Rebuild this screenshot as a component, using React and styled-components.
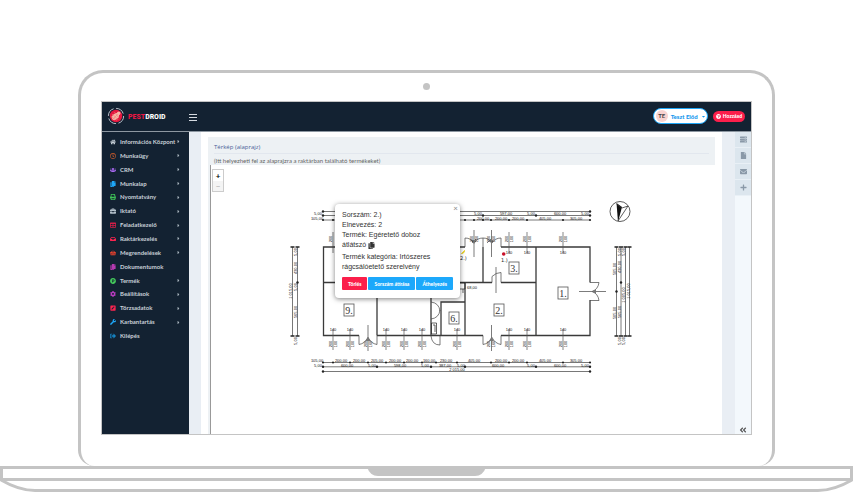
import styled, { createGlobalStyle } from 'styled-components';
import {
  FaHome, FaUsers, FaCopy, FaPrint, FaBriefcase, FaTable, FaShoppingBasket,
  FaCog, FaPenSquare, FaWrench, FaSignOutAlt, FaRegClock, FaProductHunt,
  FaServer, FaFile, FaEnvelope, FaPlus, FaAngleDoubleLeft, FaCaretRight,
  FaCaretDown, FaQuestionCircle, FaInbox,
} from 'react-icons/fa';

const MENU = [
  { label: 'Információs Központ', icon: FaHome, color: '#c3ccd4', sub: true },
  { label: 'Munkaügy', icon: FaRegClock, color: '#d8602c', sub: true },
  { label: 'CRM', icon: FaUsers, color: '#a868f0', sub: true },
  { label: 'Munkalap', icon: FaCopy, color: '#1ea7f8', sub: true },
  { label: 'Nyomtatvány', icon: FaPrint, color: '#3fc458', sub: true },
  { label: 'Iktató', icon: FaBriefcase, color: '#b4c0ca', sub: true },
  { label: 'Feladatkezelő', icon: FaTable, color: '#d41f48', sub: true },
  { label: 'Raktárkezelés', icon: FaInbox, color: '#fb2450', sub: true },
  { label: 'Megrendelések', icon: FaShoppingBasket, color: '#f5442e', sub: true },
  { label: 'Dokumentumok', icon: FaCopy, color: '#b63ab0' },
  { label: 'Termék', icon: FaProductHunt, color: '#45cc5c', sub: true },
  { label: 'Beállítások', icon: FaCog, color: '#b83cc0', sub: true },
  { label: 'Törzsadatok', icon: FaPenSquare, color: '#fb2450', sub: true },
  { label: 'Karbantartás', icon: FaWrench, color: '#1ea7f8', sub: true },
  { label: 'Kilépés', icon: FaSignOutAlt, color: '#1584c4' },
];

const TOOLS = [
  { label: 'Feladatok', icon: FaServer },
  { label: 'Dokumentum', icon: FaFile },
  { label: 'Üzenetek', icon: FaEnvelope },
  { label: 'Hozzáadás', icon: FaPlus },
];

const Logo = () => (
  <svg width="18" height="18" viewBox="0 0 18 18" aria-hidden="true">
    <circle cx="9" cy="9" r="7.6" fill="none" stroke="#c9d0d8" strokeWidth="0.9" strokeDasharray="9.300 2.600" />
    <circle cx="9" cy="9" r="6.2" fill="#e5173f" />
    <g transform="rotate(45 9 9)">
      <ellipse cx="9" cy="9.8" rx="2.8" ry="4" fill="#f6b8a8" />
      <circle cx="9" cy="5.2" r="1.800" fill="#f6b8a8" />
      <path d="M5.400 7.400l7.200 1M5 10.200h8M5.600 13l6.800-1.400M9 6.500v7" stroke="#f08a80" strokeWidth="0.7" fill="none" />
    </g>
  </svg>
);

// Horizontal dimension lines: [text, centre x]
const TOP_OUTER = [['5,00', 318], ['5,00', 478], ['597,00', 506], ['5,00', 531], ['600,00', 560], ['5,00', 585]];
const TOP_INNER = [['105,00', 317], ['200,00', 483], ['200,00', 501], ['200,00', 518], ['405,00', 545], ['305,00', 576]];
const BOTTOM_INNER = [
  ['105,00', 317], ['200,00', 341], ['200,00', 359], ['205,00', 377], ['200,00', 395], ['200,00', 412],
  ['160,00', 429], ['230,00', 446], ['405,00', 474], ['200,00', 501], ['200,00', 518], ['405,00', 545], ['305,00', 576],
];
const BOTTOM_OUTER = [
  ['5,00', 318], ['600,00', 347], ['5,00', 372], ['598,00', 400], ['5,00', 425], ['387,00', 445],
  ['5,00', 461], ['600,00', 498], ['5,00', 531], ['600,00', 560], ['5,00', 585],
];
const WINDOWS_TOP = [509, 527, 563];
const WINDOWS_BOTTOM = [333, 350, 386, 404, 422, 457, 509, 527, 563];
const ROOMS = [['9.', 349, 310], ['6.', 454, 318], ['2.', 499, 310], ['1.', 563, 293], ['3.', 514, 268]];
const TICKS_TOP = [323, 333, 465, 474, 483, 491, 509, 527, 563, 590];
const TICKS_BOTTOM = [323, 333, 350, 368, 386, 404, 422, 436, 457, 491, 509, 527, 563, 590];

const VerticalText = ({ x, y, children }) => (
  <text transform={`translate(${x} ${y}) rotate(-90)`} textAnchor="middle">{children}</text>
);

const WindowMark = ({ x, y, labelY, sizeY }) => (
  <g>
    <path d={`M${x} ${y - 11}v21`} stroke="#555" strokeWidth="0.7" />
    <text x={x} y={labelY} textAnchor="middle">140</text>
    <VerticalText x={x - 1} y={sizeY}>200</VerticalText>
    <VerticalText x={x + 4} y={sizeY}>100</VerticalText>
  </g>
);

const FloorPlan = () => (
  <PlanSvg viewBox="211 165 504 269" role="img" aria-label="Raktár alaprajza">
    <g fill="none" stroke="#555" strokeWidth="0.8">
      <path d="M323 211.500H590M323 215.500H590M323 220H590" />
      <path d="M323 362.500H590M323 366.800H590M323 371.500H590" />
      <path d="M292.500 247V336M297.500 247V336" />
      <path d="M616.500 247V336M621 247V336M625.500 247V336M629.500 247V336" />
    </g>
    <g fill="#222">
      {TICKS_TOP.map((x) => <circle key={x} cx={x} cy="220" r="1.100" />)}
      {TICKS_BOTTOM.map((x) => <circle key={x} cx={x} cy="362.500" r="1.100" />)}
      {[323, 377, 431, 465, 536, 590].map((x) => <circle key={x} cx={x} cy="366.800" r="1.200" />)}
      {[323, 483, 536, 590].map((x) => <circle key={x} cx={x} cy="215.500" r="1.200" />)}
      {[323, 590].map((x) => <circle key={x} cx={x} cy="211.500" r="1.200" />)}
      {[323, 590].map((x) => <circle key={x} cx={x} cy="371.500" r="1.200" />)}
      {[292.5, 297.5, 616.5, 621, 625.5, 629.5].map((x) => (
        <path key={x} d={`M${x - 2} 247h4M${x - 2} 336h4`} stroke="#222" strokeWidth="1.4" />
      ))}
      <circle cx="297.500" cy="282.500" r="1.200" />
      <circle cx="616.500" cy="291.500" r="1.200" />
      <circle cx="621" cy="282.500" r="1.200" />
    </g>
    <g fill="none" stroke="#3a3a3a" strokeWidth="1.3">
      <path d="M465 247H323.500V335.500H359M377 335.500H483M501 335.500H590V300M590 282.500V247H501" />
      <path d="M323.500 282.500H465M377 282.500V335.500M431 282.500V335.500M465 282.500V335.500" />
      <path d="M465 282.500H492M501 282.500H536M483 247V282.500M536 247V335.500" />
      <path d="M441 335.500V302H465" />
    </g>
    <g fill="none" stroke="#444" strokeWidth="0.7">
      <path d="M465 247v-9q6 0 9 5q3-5 9-5v9M483 238q6 0 9 5q3-5 9-5v9" />
      <path d="M483 335.500v9q6-1 9-7q3 6 9 7v-9M359 335.500v9q6-1 9-7q3 6 9 7v-9" />
      <path d="M590 282.500h9q-1 7-7 9q6 2 7 9h-9M579 291.500h27" />
      <path d="M492 282.500v-6q4-4 9-4v10M496 267v26M491.500 230v27M474 230v27" />
      <path d="M368 325v26M491.500 325v26M431 302q8 1 9 9M431 319q8-1 9-9M431 336q1 9 9 9v-9" />
      <path d="M431.500 323h5v11h-5zM433 325h2v7" stroke="#222" />
      <path d="M455 283h10v6h-10M459 283v9M463 289v4" stroke="#222" />
      <path d="M487 243l4-4M472 243l4-4M333 232v21" />
    </g>
    <g fill="#777">
      <path d="M365 341l3-4 3 4zM489 341l2.500-4 2.500 4zM489 240l2.500 4 2.500-4zM471 240l3 4 3-4zM596 289l-4 2.500 4 2.500z" />
    </g>
    <g fontFamily="'Liberation Sans', Arial, sans-serif" fontSize="4" fill="#111">
      {TOP_OUTER.map(([text, x]) => <text key={x} x={x} y="215" textAnchor="middle">{text}</text>)}
      {TOP_INNER.map(([text, x]) => <text key={x} x={x} y="220" textAnchor="middle">{text}</text>)}
      {BOTTOM_INNER.map(([text, x]) => <text key={x} x={x} y="362" textAnchor="middle">{text}</text>)}
      {BOTTOM_OUTER.map(([text, x]) => <text key={x} x={x} y="367" textAnchor="middle">{text}</text>)}
      <text x="457" y="371" textAnchor="middle">2 015,00</text>
      <text x="467" y="289">68,00</text>
      <VerticalText x={332} y={239}>200</VerticalText>
      {WINDOWS_TOP.map((x) => <WindowMark key={x} x={x} y={243} labelY={254} sizeY={239} />)}
      {WINDOWS_BOTTOM.map((x) => <WindowMark key={x} x={x} y={340} labelY={331} sizeY={344} />)}
      {[368, 491].map((x) => (
        <g key={x}>
          <VerticalText x={x - 1} y={344}>200</VerticalText>
          <VerticalText x={x + 4} y={344}>160</VerticalText>
        </g>
      ))}
      {[474, 491].map((x) => (
        <g key={x}>
          <VerticalText x={x - 1} y={239}>200</VerticalText>
          <VerticalText x={x + 4} y={239}>160</VerticalText>
        </g>
      ))}
      <VerticalText x={292} y={291}>1 015,00</VerticalText>
      <VerticalText x={297} y={268}>430,00</VerticalText>
      <VerticalText x={297} y={312}>565,00</VerticalText>
      <VerticalText x={297} y={252}>5,00</VerticalText>
      <VerticalText x={297} y={287}>5,00</VerticalText>
      <VerticalText x={297} y={341}>5,00</VerticalText>
      <VerticalText x={616} y={269}>505,00</VerticalText>
      <VerticalText x={616} y={313}>505,00</VerticalText>
      <VerticalText x={621} y={267}>430,00</VerticalText>
      <VerticalText x={621} y={312}>565,00</VerticalText>
      <VerticalText x={621} y={252}>5,00</VerticalText>
      <VerticalText x={625} y={252}>5,00</VerticalText>
      <VerticalText x={625} y={295}>1 005,00</VerticalText>
      <VerticalText x={630} y={291}>1 015,00</VerticalText>
      <VerticalText x={621} y={341}>5,00</VerticalText>
      <VerticalText x={625} y={341}>5,00</VerticalText>
    </g>
    <g fontFamily="'Liberation Serif', serif" fontSize="10" fill="#333">
      {ROOMS.map(([text, x, y]) => (
        <g key={text}>
          <rect x={x - 5} y={y - 6} width="10" height="12" fill="#fff" stroke="#555" strokeWidth="0.8" />
          <text x={x} y={y + 4} textAnchor="middle">{text}</text>
        </g>
      ))}
    </g>
    <g>
      <circle cx="620" cy="211.500" r="10" fill="#fff" stroke="#333" strokeWidth="0.8" />
      <path d="M616.500 203l1.500 19 4-15z" fill="#111" />
      <path d="M616.500 204l5.500 4 6-2-10 15" fill="none" stroke="#333" strokeWidth="0.8" />
    </g>
    <circle cx="503.700" cy="254" r="1.800" fill="#c8102a" />
    <path d="M464.500 250.500q0 3-3 3q2-1 3-3z" fill="#e8d020" stroke="#e8d020" />
    <g fontFamily="'DejaVu Sans', sans-serif" fontSize="5" fill="#222">
      <text x="501" y="262">1.)</text>
      <text x="460" y="260">2.)</text>
    </g>
  </PlanSvg>
);

const App = () => (
  <Page>
    <GlobalStyle />
    <Lid>
      <Camera />
      <Screen>
        <Header>
          <Brand href="#">
            <Logo />
            <BrandName><BrandRed>PEST</BrandRed>DROID</BrandName>
          </Brand>
          <Burger type="button" aria-label="Menü"><BurgerBar /><BurgerBar /><BurgerBar /></Burger>
          <UserButton type="button">
            <Avatar>TE</Avatar>
            Teszt Előd
            <FaCaretDown size={5} />
          </UserButton>
          <HelpButton type="button"><FaQuestionCircle size={5} />Hozzáad</HelpButton>
        </Header>
        <Workspace>
          <Sidebar>
            {MENU.map(({ label, icon: Icon, color, sub }) => (
              <MenuLink href="#" key={label}>
                <Icon size={6} color={color} />
                <MenuText>{label}</MenuText>
                {sub && <FaCaretRight size={5} />}
              </MenuLink>
            ))}
          </Sidebar>
          <Main>
            <Card>
              <CardHeader>
                <CardTitle>Térkép (alaprajz)</CardTitle>
                <CardHint>(Itt helyezheti fel az alaprajzra a raktárban található termékeket)</CardHint>
              </CardHeader>
              <MapArea>
                <FloorPlan />
                <ZoomControl>
                  <ZoomButton type="button" aria-label="Nagyítás">+</ZoomButton>
                  <ZoomButton type="button" aria-label="Kicsinyítés" disabled>−</ZoomButton>
                </ZoomControl>
                <Popup>
                  <CloseButton type="button" aria-label="Bezárás">×</CloseButton>
                  <PopupText>
                    Sorszám: 2.)<br />
                    Elnevezés: 2<br />
                    Termék: Egéretető doboz<br />
                    átlátszó <FaCopy size={7} />
                  </PopupText>
                  <PopupText>
                    Termék kategória: Irtószeres<br />
                    rágcsálóetető szerelvény
                  </PopupText>
                  <PopupActions>
                    <ActionButton type="button" $color="#fb1f4b">Törlés</ActionButton>
                    <ActionButton type="button">Sorszám átírása</ActionButton>
                    <ActionButton type="button">Áthelyezés</ActionButton>
                  </PopupActions>
                </Popup>
              </MapArea>
            </Card>
          </Main>
          <ToolRail>
            {TOOLS.map(({ label, icon: Icon }) => (
              <ToolButton type="button" aria-label={label} key={label}><Icon size={7} /></ToolButton>
            ))}
            <CollapseButton type="button" aria-label="Összecsukás"><FaAngleDoubleLeft size={8} /></CollapseButton>
          </ToolRail>
        </Workspace>
      </Screen>
    </Lid>
    <Base viewBox="0 0 853 26" preserveAspectRatio="none" aria-hidden="true">
      <path d="M1.500 14V1.500H851.500V14" fill="none" stroke="#c4c4c4" strokeWidth="3" />
      <path d="M0 13.500H853" stroke="#c4c4c4" strokeWidth="3" />
      <path d="M1 14Q19 24.500 35 24.500H818Q834 24.500 852 14" fill="none" stroke="#c4c4c4" strokeWidth="3" />
      <path d="M367 1H486Q483 10 475 10H378Q370 10 367 1z" fill="#c4c4c4" />
    </Base>
  </Page>
);

const GlobalStyle = createGlobalStyle`
  * {
    box-sizing: border-box;
  }
  body {
    margin: 0;
    background: #fff;
    font-family: Lato, 'Liberation Sans', sans-serif;
  }
  button {
    padding: 0;
    border: 0;
    background: none;
    font-family: inherit;
  }
  a {
    text-decoration: none;
  }
`;

const Page = styled.div`
  padding-top: 70px;
`;

const Lid = styled.div`
  margin: 0 78px;
  padding: 10px 20px 31px;
  border: 3px solid #c4c4c4;
  border-bottom: 0;
  border-radius: 25px 25px 16px 16px;
`;

const Camera = styled.div`
  width: 7px;
  height: 7px;
  margin: 0 auto 11px;
  border-radius: 50%;
  background: #c4c4c4;
`;

const Screen = styled.div`
  border: 1px solid #c4c4c4;
`;

const Header = styled.header`
  display: flex;
  align-items: center;
  height: 30px;
  padding: 0 6px 1px 5px;
  background: #132232;
  border-bottom: 1px solid #8d97a1;
`;

const Brand = styled.a`
  display: flex;
  align-items: center;
  gap: 3px;
  width: 82px;
`;

const BrandName = styled.span`
  color: #fff;
  font-family: 'Roboto Condensed', 'Open Sans Condensed', 'Liberation Sans Narrow', Roboto, sans-serif;
  font-size: 8px;
  font-weight: 700;
`;

const BrandRed = styled.span`
  color: #ee1744;
`;

const Burger = styled.button`
  display: grid;
  gap: 2px;
  width: 8px;
  margin: 2px auto 0 0;
`;

const BurgerBar = styled.span`
  height: 1px;
  background: #d5dae0;
`;

const UserButton = styled.button`
  display: flex;
  align-items: center;
  gap: 3px;
  height: 16px;
  padding: 0 1px 0 2px;
  border: 1px solid #1ea7f8;
  border-radius: 8px;
  background: #fff;
  color: #1598ee;
  font-size: 6px;
  font-weight: 900;
`;

const Avatar = styled.span`
  width: 12px;
  border-radius: 50%;
  background: #f8d3d0;
  color: #444;
  line-height: 12px;
  font-weight: 700;
`;

const HelpButton = styled.button`
  display: flex;
  align-items: center;
  gap: 2px;
  height: 11px;
  margin-left: 5px;
  padding: 0 3px;
  border-radius: 6px;
  background: #fb1f4b;
  color: #fff;
  font-size: 5px;
  font-weight: 900;
`;

const Workspace = styled.div`
  display: flex;
`;

const Sidebar = styled.nav`
  display: grid;
  grid-template-columns: minmax(0, 1fr);
  grid-template-rows: repeat(15, 1fr);
  align-self: stretch;
  width: 87px;
  padding: 3px 8px 91px 8px;
  background: #132232;
`;

const MenuLink = styled.a`
  display: flex;
  align-items: center;
  gap: 4px;
  color: #a9b4be;
  font-size: 6px;
  font-weight: 700;
  line-height: 8px;

  svg {
    flex: none;
  }
`;

const MenuText = styled.span`
  flex: 1;
  min-width: 0;
  color: #c8d0d8;
  white-space: nowrap;
`;

const Main = styled.main`
  flex: 1;
  padding: 5px 7px 0;
  border: solid #e9eef4;
  border-width: 0 13px 0 12px;
`;

const Card = styled.section`
  background: #edf1f4;
`;

const CardHeader = styled.div`
  height: 28px;
  padding: 6px 6px 0;
`;

const CardTitle = styled.h1`
  margin: 0 0 3px;
  padding-bottom: 1px;
  border-bottom: 1px solid #e2e7ee;
  color: #4a5f98;
  font-family: 'Open Sans', sans-serif;
  font-size: 6px;
  font-weight: 400;
  line-height: 9px;
`;

const CardHint = styled.p`
  margin: 0;
  color: #666;
  font-size: 6px;
  line-height: 8px;
`;

const MapArea = styled.div`
  position: relative;
  margin-left: 2px;
  border-left: 1px solid #999;
  background: #fff;
`;

const PlanSvg = styled.svg`
  display: block;
  width: 100%;
  height: auto;
`;

const ZoomControl = styled.div`
  position: absolute;
  top: 4px;
  left: 1px;
  display: grid;
  border: 1px solid #ccc;
`;

const ZoomButton = styled.button`
  width: 10px;
  height: 11px;
  background: ${({ disabled }) => (disabled ? '#f4f4f4' : '#fff')};
  color: ${({ disabled }) => (disabled ? '#bbb' : '#000')};
  font-size: 8px;
  font-weight: 700;
  line-height: 10px;

  & + & {
    height: 10px;
  }
`;

const Popup = styled.div`
  position: absolute;
  top: 39px;
  left: 124px;
  width: 125px;
  padding: 6px 3px 8px 7px;
  border-radius: 4px;
  background: #fff;
  box-shadow: 0 1px 5px rgba(0, 0, 0, 0.5);
`;

const CloseButton = styled.button`
  position: absolute;
  top: 1px;
  right: 2px;
  color: #888;
  font-size: 8px;
  line-height: 6px;
`;

const PopupText = styled.p`
  margin: 0 0 2px;
  color: #333;
  font-family: 'Liberation Sans', Arial, sans-serif;
  font-size: 7px;
  line-height: 10px;
  white-space: nowrap;

  svg {
    vertical-align: middle;
  }
`;

const PopupActions = styled.div`
  display: flex;
  gap: 1px;
  margin-top: 5px;
`;

const ActionButton = styled.button`
  height: 13px;
  padding: 0 6px;
  border-radius: 1px;
  background: ${({ $color }) => $color || '#1ca8fb'};
  color: #fff;
  font-size: 5px;
  font-weight: 900;
  white-space: nowrap;
`;

const ToolRail = styled.aside`
  display: flex;
  flex-direction: column;
  width: 16px;
  background: #f3f8fc;
`;

const ToolButton = styled.button`
  display: grid;
  place-items: center;
  height: 16px;
  border-bottom: 1px solid #e9f0f6;
  background: #dce6ee;
  color: #8a99a8;
`;

const CollapseButton = styled.button`
  margin-top: auto;
  color: #555;
  line-height: 8px;
`;

const Base = styled.svg`
  display: block;
  width: 100%;
  height: 26px;
`;

export default App;
